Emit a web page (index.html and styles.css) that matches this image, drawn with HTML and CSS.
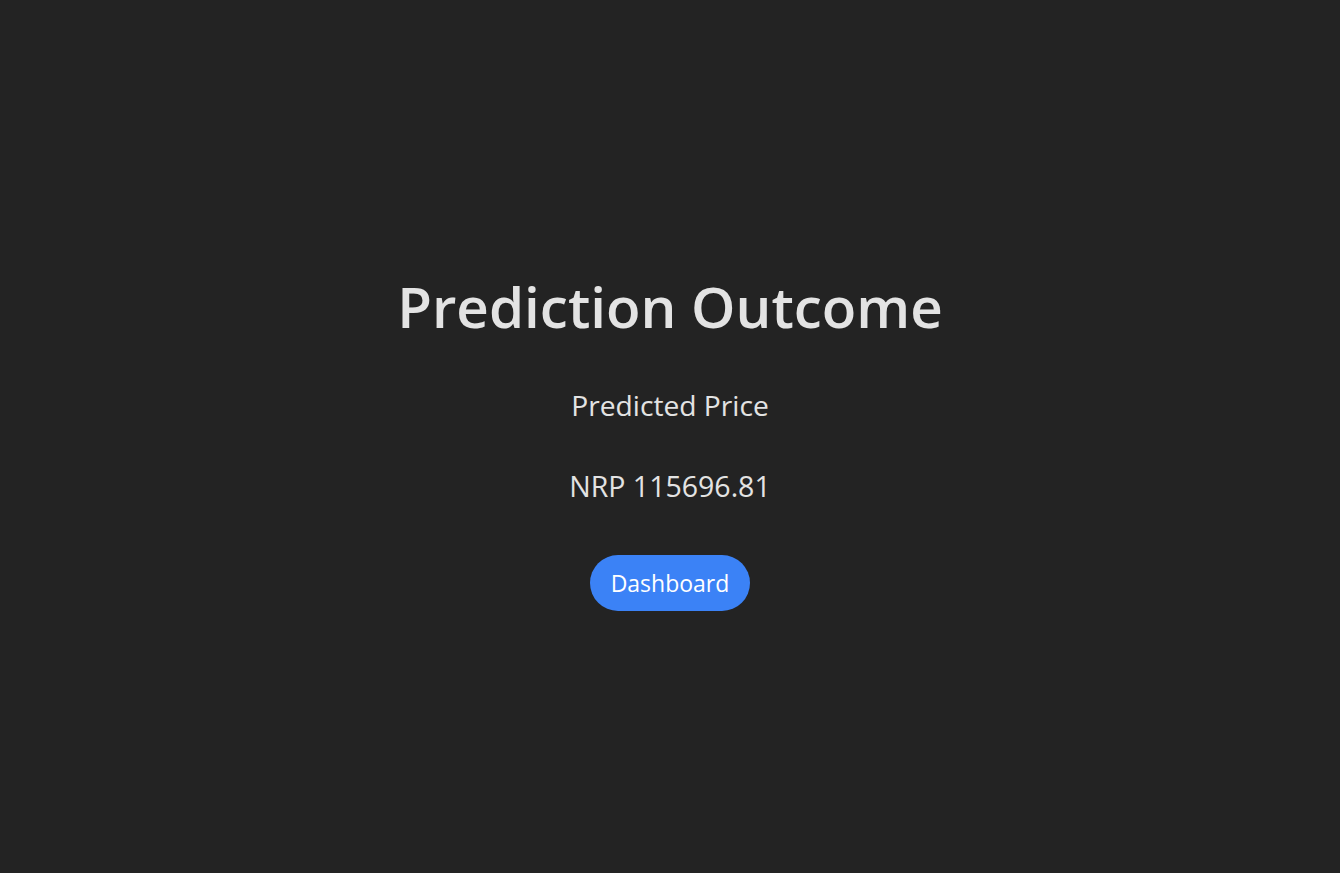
FILE: index.html
```html
<!DOCTYPE html>
<html lang="en">
<head>
<meta charset="utf-8">
<title>Prediction Outcome</title>
<link rel="stylesheet" href="styles.css">
</head>
<body>
<main class="page">
  <section class="result">
    <h1 class="title">Prediction Outcome</h1>
    <p class="label">Predicted Price</p>
    <p class="value">NRP 115696.81</p>
    <a class="btn" href="#">Dashboard</a>
  </section>
</main>
</body>
</html>
```
FILE: styles.css
```css
html, body {
  margin: 0;
  padding: 0;
  height: 100%;
}
body {
  background: #232323;
  color: #e3e3e3;
  font-family: "Open Sans", "Noto Sans", sans-serif;
}
.page {
  box-sizing: border-box;
  min-height: 100vh;
  padding-top: 5px;
  display: flex;
  align-items: center;
  justify-content: center;
}
.result {
  display: flex;
  flex-direction: column;
  align-items: center;
  text-align: center;
}
.title {
  margin: 0;
  font-size: 56.5px;
  font-weight: 600;
  line-height: 80px;
  color: #e3e3e3;
}
.label {
  margin: 38px 0 0;
  font-size: 28.2px;
  line-height: 40px;
}
.value {
  margin: 41px 0 0;
  font-size: 28.5px;
  line-height: 40px;
}
.btn {
  margin-top: 49px;
  display: inline-flex;
  align-items: center;
  justify-content: center;
  width: 160px;
  height: 56px;
  border-radius: 28px;
  background: #3b82f6;
  color: #ffffff;
  font-size: 23px;
  text-decoration: none;
}
```
